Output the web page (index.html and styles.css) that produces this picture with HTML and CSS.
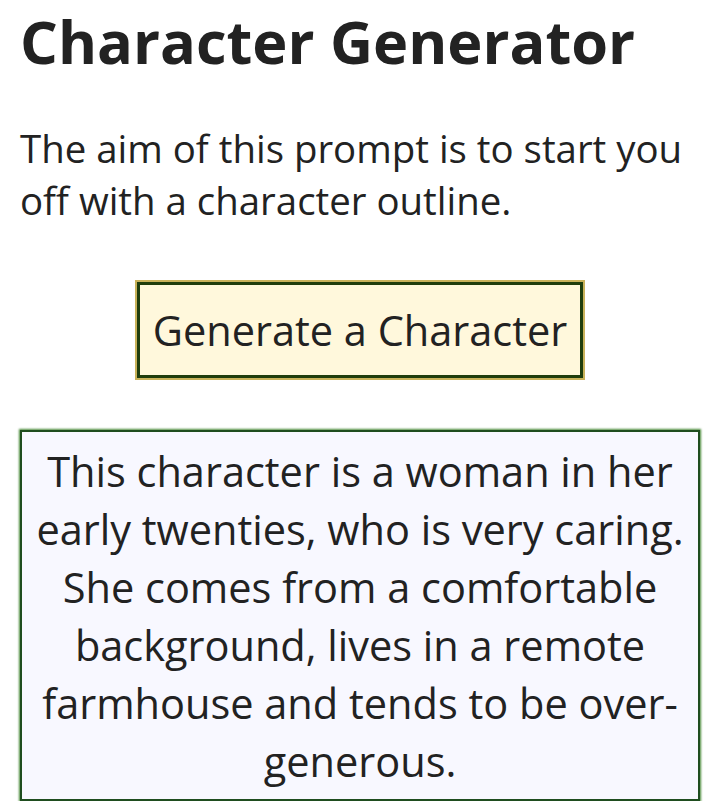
FILE: index.html
```html
<!DOCTYPE html>
<html lang="en">

<head>
    <meta charset="UTF-8">
    <meta name="viewport" content="width=device-width, initial-scale=1.0">
    <title>Character Generator</title>
    <link rel="stylesheet" href="styles.css">
</head>

<body>
    <h1>Character Generator</h1>
    <p class="intro">The aim of this prompt is to start you off with a character outline.</p>

    <div class="actions">
        <button class="generate-btn">Generate a Character</button>
    </div>

    <div class="result">
        This character is a woman in her early twenties, who is very caring. She comes from a comfortable background, lives in a remote farmhouse and tends to be over-generous.
    </div>
</body>

</html>
```

FILE: styles.css
```css
body {
    font-family: "Open Sans", Arial, sans-serif;
    color: #222;
    margin: 0;
    padding: 0 20px;
    background: white;
}

h1 {
    font-size: 59.5px;
    font-weight: 700;
    margin: 0;
    line-height: normal;
}

.intro {
    font-size: 38.4px;
    line-height: 52px;
    margin: 41px 0 0;
}

.actions {
    display: flex;
    justify-content: center;
    margin-top: 56px;
}

.generate-btn {
    font-family: inherit;
    font-size: 41.5px;
    line-height: 56px;
    color: #222;
    background: #fff8dc;
    border: 3px solid #1f3d0c;
    box-shadow: 0 0 0 2px #c9b25a;
    padding: 17px 13px;
}

.result {
    margin-top: 52px;
    background: #f8f8ff;
    border: 2px solid #1f4d1f;
    box-shadow: 0 0 2px 1px #4a8a3a;
    text-align: center;
    font-size: 41.5px;
    line-height: 58px;
    padding: 10px 8px 9px;
}
```
